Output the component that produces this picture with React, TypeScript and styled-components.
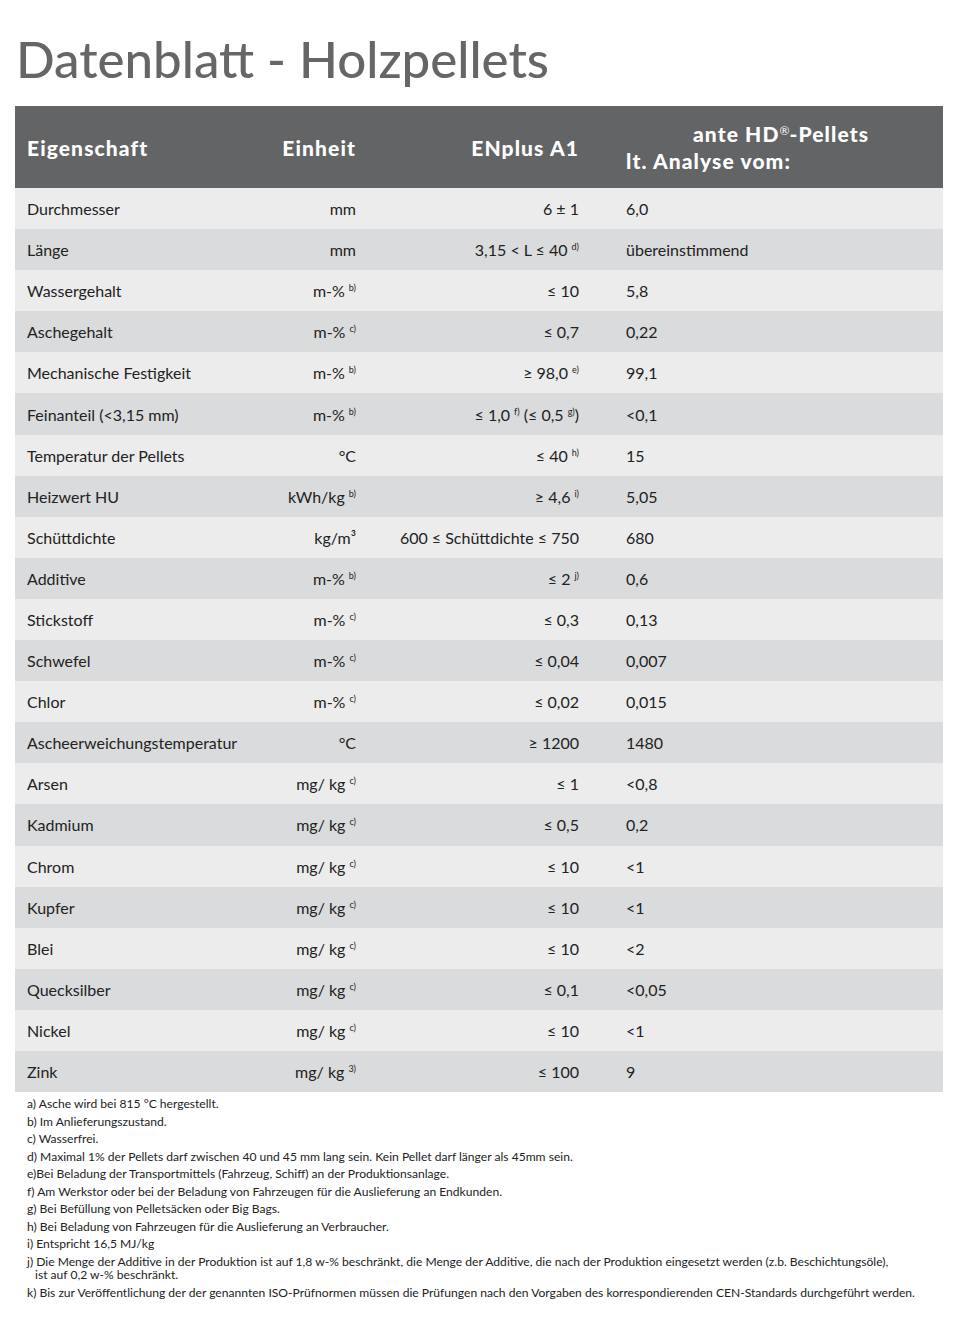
import React from "react";
import styled, { createGlobalStyle } from "styled-components";

const Global = createGlobalStyle`
  html, body { margin: 0; padding: 0; background: #fff; }
  body { font-family: "Lato", "Liberation Sans", sans-serif; color: #222; }
`;

const Page = styled.div`
  width: 978px;
  height: 1329px;
  box-sizing: border-box;
  padding: 26px 35px 0 15px;
  display: flex;
  flex-direction: column;
`;

const Title = styled.h1`
  margin: 0 0 14px 1px;
  font-family: "Lato", "Liberation Sans", sans-serif;
  font-weight: 500;
  font-size: 51px;
  line-height: 66px;
  color: #666666;
  letter-spacing: 0;
`;

const Table = styled.div`
  display: flex;
  flex-direction: column;
  width: 928px;
`;

const cols = `250px 103px 223px 1fr`;

const HeaderRow = styled.div`
  display: grid;
  grid-template-columns: ${cols};
  height: 82px;
  background: #636466;
  color: #fff;
  font-weight: 900;
  font-size: 21px;
  letter-spacing: 1.1px;
  align-items: center;
`;

const Row = styled.div<{ $alt: boolean }>`
  display: grid;
  grid-template-columns: ${cols};
  height: 41.1px;
  align-items: center;
  background: ${(p) => (p.$alt ? "#dadbdc" : "#ececec")};
  font-size: 16px;
  color: #222;
`;

const Cell = styled.div<{ $align?: "left" | "right"; $pl?: number; $pr?: number }>`
  text-align: ${(p) => p.$align ?? "left"};
  padding-left: ${(p) => p.$pl ?? 0}px;
  padding-right: ${(p) => p.$pr ?? 0}px;
  white-space: nowrap;
`;

const Sup = styled.sup`
  font-size: 9px;
  vertical-align: 6px;
  line-height: 0;
  margin-left: 4px;
`;

const HeadSup = styled.sup`
  font-size: 12px;
  vertical-align: 7px;
  line-height: 0;
  font-weight: 400;
  letter-spacing: 0;
`;

const HeadLine = styled.div<{ $indent?: number }>`
  padding-left: ${(p) => p.$indent ?? 0}px;
  line-height: 27px;
`;

const Notes = styled.div`
  padding: 3px 0 0 12px;
  font-size: 12.1px;
  color: #222;
`;

const Note = styled.div`
  line-height: 17.5px;
  white-space: nowrap;
`;

const NoteCont = styled.div`
  line-height: 14px;
  padding-left: 8px;
  margin-top: -2px;
  margin-bottom: 2px;
`;

type R = [string, string, string | undefined, React.ReactNode, string];

const rows: R[] = [
  ["Durchmesser", "mm", undefined, "6 ± 1", "6,0"],
  ["Länge", "mm", undefined, <>3,15 &lt; L ≤ 40<Sup>d)</Sup></>, "übereinstimmend"],
  ["Wassergehalt", "m-%", "b)", "≤ 10", "5,8"],
  ["Aschegehalt", "m-%", "c)", "≤ 0,7", "0,22"],
  ["Mechanische Festigkeit", "m-%", "b)", <>≥ 98,0<Sup>e)</Sup></>, "99,1"],
  ["Feinanteil (<3,15 mm)", "m-%", "b)", <>≤ 1,0<Sup>f)</Sup> (≤ 0,5<Sup>g)</Sup>)</>, "<0,1"],
  ["Temperatur der Pellets", "°C", undefined, <>≤ 40<Sup>h)</Sup></>, "15"],
  ["Heizwert HU", "kWh/kg", "b)", <>≥ 4,6<Sup>i)</Sup></>, "5,05"],
  ["Schüttdichte", "kg/m³", undefined, "600 ≤ Schüttdichte ≤ 750", "680"],
  ["Additive", "m-%", "b)", <>≤ 2<Sup>j)</Sup></>, "0,6"],
  ["Stickstoff", "m-%", "c)", "≤ 0,3", "0,13"],
  ["Schwefel", "m-%", "c)", "≤ 0,04", "0,007"],
  ["Chlor", "m-%", "c)", "≤ 0,02", "0,015"],
  ["Ascheerweichungstemperatur", "°C", undefined, "≥ 1200", "1480"],
  ["Arsen", "mg/ kg", "c)", "≤ 1", "<0,8"],
  ["Kadmium", "mg/ kg", "c)", "≤ 0,5", "0,2"],
  ["Chrom", "mg/ kg", "c)", "≤ 10", "<1"],
  ["Kupfer", "mg/ kg", "c)", "≤ 10", "<1"],
  ["Blei", "mg/ kg", "c)", "≤ 10", "<2"],
  ["Quecksilber", "mg/ kg", "c)", "≤ 0,1", "<0,05"],
  ["Nickel", "mg/ kg", "c)", "≤ 10", "<1"],
  ["Zink", "mg/ kg", "3)", "≤ 100", "9"],
];

const notes = [
  "a) Asche wird bei 815 °C hergestellt.",
  "b) Im Anlieferungszustand.",
  "c) Wasserfrei.",
  "d) Maximal 1% der Pellets darf zwischen 40 und 45 mm lang sein. Kein Pellet darf länger als 45mm sein.",
  "e)Bei Beladung der Transportmittels (Fahrzeug, Schiff) an der Produktionsanlage.",
  "f) Am Werkstor oder bei der Beladung von Fahrzeugen für die Auslieferung an Endkunden.",
  "g) Bei Befüllung von Pelletsäcken oder Big Bags.",
  "h) Bei Beladung von Fahrzeugen für die Auslieferung an Verbraucher.",
  "i) Entspricht 16,5 MJ/kg",
];

export default function App() {
  return (
    <>
      <Global />
      <Page>
        <Title>Datenblatt - Holzpellets</Title>
        <Table>
          <HeaderRow>
            <Cell $pl={12}>Eigenschaft</Cell>
            <Cell $align="right" $pr={12}>Einheit</Cell>
            <Cell $align="right" $pr={12}>ENplus A1</Cell>
            <Cell $pl={35}>
              <HeadLine $indent={67}>
                ante HD<HeadSup>®</HeadSup>-Pellets
              </HeadLine>
              <HeadLine>lt. Analyse vom:</HeadLine>
            </Cell>
          </HeaderRow>
          {rows.map(([name, unit, unitSup, limit, value], i) => (
            <Row key={name} $alt={i % 2 === 1}>
              <Cell $pl={12}>{name}</Cell>
              <Cell $align="right" $pr={12}>
                {unit}
                {unitSup && <Sup>{unitSup}</Sup>}
              </Cell>
              <Cell $align="right" $pr={12}>{limit}</Cell>
              <Cell $pl={35}>{value}</Cell>
            </Row>
          ))}
        </Table>
        <Notes>
          {notes.map((n) => (
            <Note key={n}>{n}</Note>
          ))}
          <Note>
            j) Die Menge der Additive in der Produktion ist auf 1,8 w-% beschränkt, die Menge der Additive, die nach der Produktion eingesetzt werden (z.b. Beschichtungsöle),
          </Note>
          <NoteCont>ist auf 0,2 w-% beschränkt.</NoteCont>
          <Note>
            k) Bis zur Veröffentlichung der der genannten ISO-Prüfnormen müssen die Prüfungen nach den Vorgaben des korrespondierenden CEN-Standards durchgeführt werden.
          </Note>
        </Notes>
      </Page>
    </>
  );
}
